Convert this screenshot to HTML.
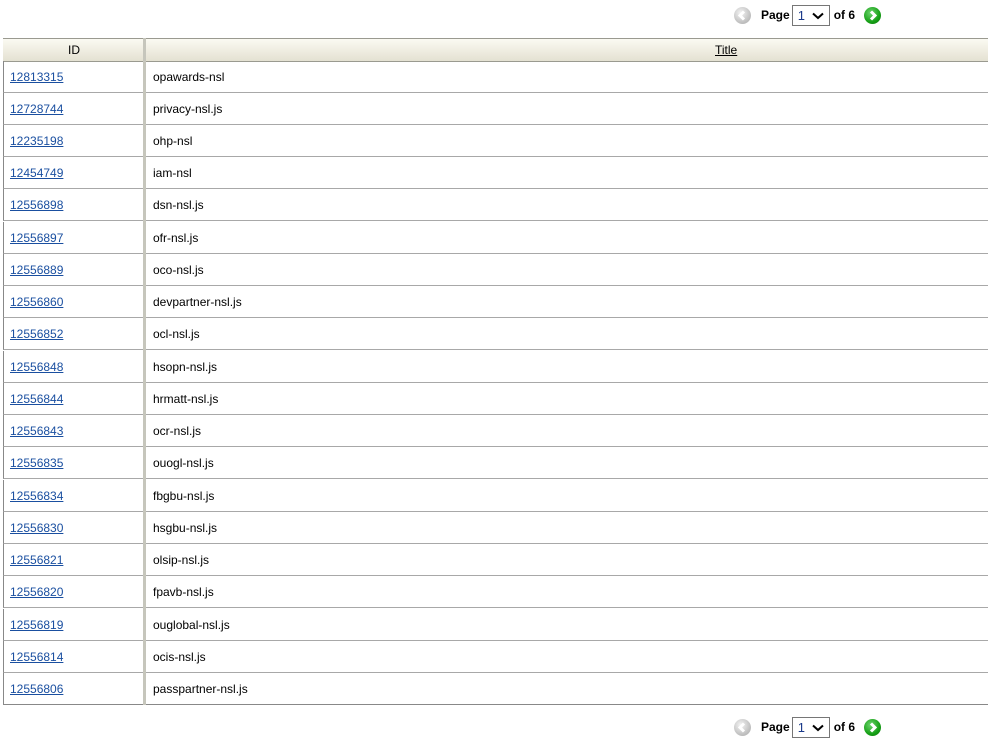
<!DOCTYPE html>
<html><head><meta charset="utf-8"><style>
body{margin:0;width:988px;height:756px;background:#fff;font-family:"Liberation Sans",sans-serif;font-size:12px;color:#000;position:relative;overflow:hidden}
.pg{position:absolute;left:734px;height:22px;display:flex;align-items:center;font-weight:bold;font-size:12px}
.pg .ic{width:17px;height:17px;border-radius:50%;display:inline-block;position:relative}
.prev{background:radial-gradient(circle at 40% 35%,#f4f4f4,#c4c4c4 60%,#a8a8a8)}
.next{background:radial-gradient(circle at 40% 35%,#6ed46e,#16a016 60%,#0a700a)}
.sel{display:inline-block;width:38px;height:21px;border:1px solid #767676;box-sizing:border-box;font-weight:normal;color:#1a3a8a;font-size:13px;line-height:19px;padding-left:5px;position:relative;margin:0 4px 0 2px}
.hd{position:absolute;left:3px;top:38px;width:985px;height:22px;border-top:1px solid #9a9a90;border-bottom:1px solid #9a9a90;background:linear-gradient(#fbfaf2,#e4e1d2)}
.row{position:absolute;left:3px;width:985px;height:31px;border-bottom:1px solid #a8a8a8;border-left:1px solid #888}
.row a{position:absolute;left:6px;top:9px;color:#1a4fa0;text-decoration:underline}
.row span{position:absolute;left:149px;top:9px}
.div{position:absolute;left:143px;top:38px;width:3px;height:667px;background:#c6c6bc}
</style></head><body>
<div class="pg" style="top:4px"><span class="ic prev"><svg width="17" height="17" style="position:absolute"><path d="M10 4.5L6 8.5L10 12.5" stroke="#fff" stroke-width="3" fill="none"/></svg></span><span style="margin-left:10px">Page</span><span class="sel">1<svg width="12" height="8" style="position:absolute;right:5px;top:6px"><path d="M1 1.5L6 6L11 1.5" stroke="#000" stroke-width="2" fill="none"/></svg></span>of 6<span class="ic next" style="margin-left:9px"><svg width="17" height="17" style="position:absolute"><path d="M7 4.5L11 8.5L7 12.5" stroke="#fff" stroke-width="3" fill="none"/></svg></span></div>
<div class="hd"><span style="position:absolute;left:65px;top:4px">ID</span><span style="position:absolute;left:712px;top:4px;text-decoration:underline">Title</span></div>
<div class="row" style="top:61px"><a>12813315</a><span>opawards-nsl</span></div>
<div class="row" style="top:93px"><a>12728744</a><span>privacy-nsl.js</span></div>
<div class="row" style="top:125px"><a>12235198</a><span>ohp-nsl</span></div>
<div class="row" style="top:157px"><a>12454749</a><span>iam-nsl</span></div>
<div class="row" style="top:189px"><a>12556898</a><span>dsn-nsl.js</span></div>
<div class="row" style="top:222px"><a>12556897</a><span>ofr-nsl.js</span></div>
<div class="row" style="top:254px"><a>12556889</a><span>oco-nsl.js</span></div>
<div class="row" style="top:286px"><a>12556860</a><span>devpartner-nsl.js</span></div>
<div class="row" style="top:318px"><a>12556852</a><span>ocl-nsl.js</span></div>
<div class="row" style="top:351px"><a>12556848</a><span>hsopn-nsl.js</span></div>
<div class="row" style="top:383px"><a>12556844</a><span>hrmatt-nsl.js</span></div>
<div class="row" style="top:415px"><a>12556843</a><span>ocr-nsl.js</span></div>
<div class="row" style="top:447px"><a>12556835</a><span>ouogl-nsl.js</span></div>
<div class="row" style="top:480px"><a>12556834</a><span>fbgbu-nsl.js</span></div>
<div class="row" style="top:512px"><a>12556830</a><span>hsgbu-nsl.js</span></div>
<div class="row" style="top:544px"><a>12556821</a><span>olsip-nsl.js</span></div>
<div class="row" style="top:576px"><a>12556820</a><span>fpavb-nsl.js</span></div>
<div class="row" style="top:609px"><a>12556819</a><span>ouglobal-nsl.js</span></div>
<div class="row" style="top:641px"><a>12556814</a><span>ocis-nsl.js</span></div>
<div class="row" style="top:673px;border-bottom-color:#888"><a>12556806</a><span>passpartner-nsl.js</span></div>
<div class="div"></div>
<div class="pg" style="top:716px"><span class="ic prev"><svg width="17" height="17" style="position:absolute"><path d="M10 4.5L6 8.5L10 12.5" stroke="#fff" stroke-width="3" fill="none"/></svg></span><span style="margin-left:10px">Page</span><span class="sel">1<svg width="12" height="8" style="position:absolute;right:5px;top:6px"><path d="M1 1.5L6 6L11 1.5" stroke="#000" stroke-width="2" fill="none"/></svg></span>of 6<span class="ic next" style="margin-left:9px"><svg width="17" height="17" style="position:absolute"><path d="M7 4.5L11 8.5L7 12.5" stroke="#fff" stroke-width="3" fill="none"/></svg></span></div>
</body></html>
